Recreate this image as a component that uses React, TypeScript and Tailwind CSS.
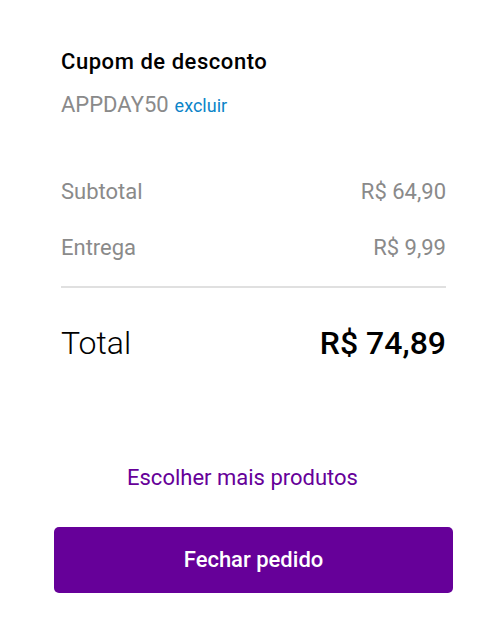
interface PriceRowProps {
  label: string;
  value: string;
}

function PriceRow({ label, value }: PriceRowProps) {
  return (
    <div className="flex items-center justify-between text-[22px] leading-6 text-[#8a8a8a]">
      <dt>{label}</dt>
      <dd>{value}</dd>
    </div>
  );
}

export default function App() {
  return (
    <main className="bg-white pt-12 pr-[47px] pb-11 pl-[54px] font-['Roboto',sans-serif]">
      <section className="px-[7px]">
        <h2 className="text-[22px] leading-7 font-medium tracking-wide text-black">
          Cupom de desconto
        </h2>
        <div className="mt-[17px] flex items-baseline gap-[6px]">
          <span className="text-[22px] leading-6 text-[#8a8a8a]">APPDAY50</span>
          <button type="button" className="text-lg leading-6 text-[#0c84c8]">
            excluir
          </button>
        </div>
      </section>

      <dl className="mt-[62px] px-[7px]">
        <div className="flex flex-col gap-8 border-b-2 border-[#e0e0e0] pb-[26px]">
          <PriceRow label="Subtotal" value="R$ 64,90" />
          <PriceRow label="Entrega" value="R$ 9,99" />
        </div>
        <div className="mt-[35px] flex items-center justify-between text-[32px] leading-10 text-black">
          <dt className="font-light">Total</dt>
          <dd className="font-medium">R$ 74,89</dd>
        </div>
      </dl>

      <div className="mt-[103px] flex flex-col gap-[37px]">
        <div className="pr-[22px] text-center text-[22px] leading-6">
          <a href="#" className="text-[#660099]">
            Escolher mais produtos
          </a>
        </div>
        <button
          type="button"
          className="h-[66px] rounded-[5px] bg-[#660099] pb-0.5 text-[22px] font-medium text-white"
        >
          Fechar pedido
        </button>
      </div>
    </main>
  );
}
